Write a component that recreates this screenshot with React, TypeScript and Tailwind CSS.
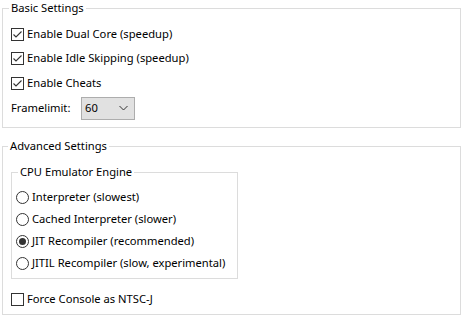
import { ReactNode } from "react";

const font = { fontFamily: '"Noto Sans", "Open Sans", sans-serif' };

function CheckBox({ checked, label }: { checked?: boolean; label: string }) {
  return (
    <label className="flex items-center h-[24.5px] gap-[3px] whitespace-nowrap">
      <span className="w-[13px] h-[13px] border border-[#333333] bg-white flex items-center justify-center shrink-0">
        {checked && (
          <svg width="11" height="11" viewBox="0 0 11 11">
            <path d="M1.5 5.5 L4 8 L9.5 2.5" fill="none" stroke="#333333" strokeWidth="1.1" />
          </svg>
        )}
      </span>
      <span>{label}</span>
    </label>
  );
}

function Radio({ checked, label }: { checked?: boolean; label: string }) {
  return (
    <label className="flex items-center h-[22px] gap-[3px] whitespace-nowrap">
      <span className="w-[13px] h-[13px] rounded-full border border-[#333333] bg-white flex items-center justify-center shrink-0">
        {checked && <span className="w-[7px] h-[7px] rounded-full bg-[#333333]" />}
      </span>
      <span>{label}</span>
    </label>
  );
}

function Group({
  title,
  children,
  className,
  legendClass,
}: {
  title: string;
  children: ReactNode;
  className?: string;
  legendClass?: string;
}) {
  return (
    <fieldset className={`border border-[#dcdcdc] ${className ?? ""}`}>
      <legend className={`px-[2px] leading-[16px] ${legendClass ?? ""}`}>{title}</legend>
      {children}
    </fieldset>
  );
}

export default function App() {
  const radios = [
    { label: "Interpreter (slowest)" },
    { label: "Cached Interpreter (slower)" },
    { label: "JIT Recompiler (recommended)", checked: true },
    { label: "JITIL Recompiler (slow, experimental)" },
  ];

  return (
    <div className="w-[464px] h-[319px] bg-white text-[11.2px] text-black pl-[2px] pr-[3px]" style={font}>
      <Group title="Basic Settings" className="h-[128px] px-[8px]" legendClass="-ml-[2px]">
        <div className="mt-[6px] flex flex-col">
          <CheckBox checked label="Enable Dual Core (speedup)" />
          <CheckBox checked label="Enable Idle Skipping (speedup)" />
          <CheckBox checked label="Enable Cheats" />
          <div className="mt-[1px] flex items-center">
            <span className="w-[70px]">Framelimit:</span>
            <div className="w-[54px] h-[23px] bg-[#e1e1e1] border border-[#adadad] flex items-center justify-between pl-[3px] pr-[6px]">
              <span>60</span>
              <svg width="9" height="6" viewBox="0 0 9 6">
                <path d="M0.5 1 L4.5 5 L8.5 1" fill="none" stroke="#333333" strokeWidth="1" />
              </svg>
            </div>
          </div>
        </div>
      </Group>

      <Group title="Advanced Settings" className="mt-[10px] h-[177px] px-[8px]" legendClass="-ml-[3px]">
        <Group
          title="CPU Emulator Engine"
          className="mt-[10px] w-[227px] h-[115px] pl-[4px]"
          legendClass="ml-[2px]"
        >
          <div className="mt-[6px] flex flex-col">
            {radios.map((r) => (
              <Radio key={r.label} label={r.label} checked={r.checked} />
            ))}
          </div>
        </Group>
        <div className="mt-[8px]">
          <CheckBox label="Force Console as NTSC-J" />
        </div>
      </Group>
    </div>
  );
}
